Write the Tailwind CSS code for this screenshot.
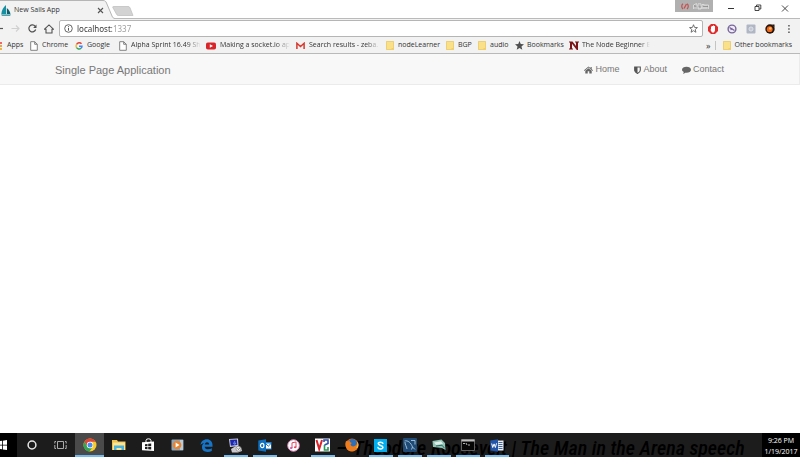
<!DOCTYPE html>
<html lang="en">
<head>
  <meta charset="UTF-8" />
  <meta name="viewport" content="width=device-width, initial-scale=1.0"/>
  <title>New Sails App</title>
  <script src="https://cdn.jsdelivr.net/npm/@tailwindcss/browser@4"></script>
</head>
<body class="flex h-screen flex-col overflow-hidden bg-white font-['Open_Sans','Noto_Sans',sans-serif] text-[7px] text-[#333]">

  <!-- Reusable shapes -->
  <svg class="hidden">
    <symbol id="doc" viewBox="0 0 8 10"><path d="M.7.7h4l2.6 2.6v6H.7zM4.7.7v2.6h2.6" fill="#fff" stroke="#777" stroke-width=".9"/></symbol>
    <symbol id="folder" viewBox="0 0 8 9"><path d="M.4.4h7.2v8.2H.4z" fill="#fbe08a" stroke="#e9c65c" stroke-width=".8"/><path d="M5.5 7h2v1.6h-2z" fill="#f3cf62"/></symbol>
  </svg>

  <!-- Tab strip -->
  <header class="relative flex h-[18px] shrink-0 items-stretch justify-between">
    <div class="flex">
      <div class="relative flex w-[112px] items-center pt-[2px]">
        <svg class="absolute inset-0 h-[19px] w-[120px]" viewBox="0 0 120 19"><path d="M0 .5h103c2 0 3 1 3.500 2.500L112 16c.6 1.500 1.500 2.500 3 2.500V19H0z" fill="#f2f2f2"/><path d="M0 .5h103c2 0 3 1 3.500 2.500L112 16c.6 1.500 1.500 2.500 3 2.500" fill="none" stroke="#b5b5b5"/></svg>
        <svg class="relative ml-px h-[11px] w-[10px]" viewBox="0 0 10 11"><path d="M5 0v9H.3C.6 5 2.500 2 5 0z" fill="#168fa0"/><path d="M5.800 3c2 1.600 3.300 3.600 3.600 6H5.800z" fill="#0b6070"/><path d="M0 9.500h10l-1 1.200H1z" fill="#1d8797"/></svg>
        <span class="relative ml-[3px] w-[83px]">New Sails App</span>
        <button class="relative" aria-label="Close tab"><svg class="size-[7px]" viewBox="0 0 7 7"><path d="M1 1l5 5M6 1L1 6" stroke="#555" stroke-width="1.100"/></svg></button>
      </div>
      <button class="relative mt-[5px] h-[11px]" aria-label="New tab"><svg class="h-[10px] w-[22px]" viewBox="0 0 22 10"><path d="M1.500.5h14.500c1 0 1.500.4 2 1.300L21 9.500H6.500c-1 0-1.600-.4-2-1.300L.8 1.500C.6.900.8.500 1.500.500z" fill="#d3d3d3" stroke="#bbb" stroke-width=".7"/></svg></button>
    </div>
    <div class="flex items-start">
      <div class="mr-[14px] flex h-[12px] w-[38px] items-center gap-[4px] bg-[#b0b0b0] pl-[6px]">
        <svg class="h-[7px] w-[8px]" viewBox="0 0 8 7"><path d="M2 .8C.3 2 .3 4.500 2 6M6 .8c1.700 1.200 1.700 3.700 0 5.200" fill="none" stroke="#c8504d" stroke-width="1.200"/><path d="M3 5.500L5.500 1" stroke="#c8504d" stroke-width="1.300"/></svg>
        <svg class="h-[7px] w-[16px]" viewBox="0 0 16 7"><path d="M.5 6V2l3-1.500L3 3h2V.8h3V6H5V3.500M1 5h3M9 6V1.500h2V6M11 2h2v4M13 2h2.500v4M5 5h10" fill="none" stroke="#e2e2e2" stroke-width=".8"/><path d="M1 3h2.500M6 4h2M10 3.500h5" stroke="#777" stroke-width=".6"/></svg>
      </div>
      <button class="h-[16px] w-[27px]" aria-label="Minimize"><svg class="h-[16px] w-[8px]" viewBox="0 0 8 16"><path d="M1 8.500h6" stroke="#333"/></svg></button>
      <button class="h-[16px] w-[27px]" aria-label="Restore"><svg class="h-[16px] w-[8px]" viewBox="0 0 8 16"><path d="M1 6.500h4v4H1zM2.500 6.500V5H6.800v4H5" fill="none" stroke="#333" stroke-width=".9"/></svg></button>
      <button class="h-[16px] w-[19px]" aria-label="Close"><svg class="h-[16px] w-[8px]" viewBox="0 0 8 16"><path d="M1 5.500l6 6M7 5.500l-6 6" stroke="#333" stroke-width=".9"/></svg></button>
    </div>
  </header>

  <!-- Toolbar -->
  <div class="flex h-[20px] shrink-0 items-center border-t border-[#bababa] bg-[#f2f2f2]">
    <button class="w-[11px]" aria-label="Back"><svg class="h-[9px] w-[4px]" viewBox="0 0 4 9"><path d="M0 4.500h3" stroke="#555" stroke-width="1.200"/></svg></button>
    <button class="w-[17px]" aria-label="Forward"><svg class="h-[9px] w-[9px]" viewBox="0 0 9 9"><path d="M.5 4.500h7.500M5 1.500l3 3-3 3" fill="none" stroke="#d0d0d0" stroke-width="1.100"/></svg></button>
    <button class="w-[16px]" aria-label="Reload"><svg class="size-[9px]" viewBox="0 0 9 9"><path d="M7.700 5.500A3.500 3.500 0 1 1 7.200 2.300" fill="none" stroke="#505050" stroke-width="1.200"/><path d="M8.500.5v3.400H5.100z" fill="#505050"/></svg></button>
    <button class="w-[15px]" aria-label="Home"><svg class="size-[10px]" viewBox="0 0 10 10"><path d="M.5 5.200L5 .9l4.500 4.300H8V9H2V5.200z" fill="none" stroke="#505050" stroke-width="1.100"/></svg></button>
    <div class="flex h-[17px] min-w-0 grow items-center rounded-[2px] border border-[#b5b5b5] bg-white px-[4px]">
      <svg class="size-[9px] shrink-0" viewBox="0 0 9 9"><circle cx="4.500" cy="4.500" r="3.800" fill="none" stroke="#555" stroke-width=".9"/><path d="M4.500 4v2.700M4.500 2.200v1" stroke="#555"/></svg>
      <div class="ml-[4px] grow font-['Noto_Sans','Open_Sans',sans-serif] text-[8px] leading-[12px]">
        <input aria-label="Address" value="localhost:1337" class="block w-full bg-linear-to-r from-[#333] from-[35px] to-[#999] to-[35px] bg-clip-text text-transparent outline-none"/>
      </div>
      <button aria-label="Bookmark this page"><svg class="size-[9px]" viewBox="0 0 10 10"><path d="M5 .8l1.200 3 3.200.2-2.500 2 .8 3.200L5 7.400 2.300 9.200l.8-3.200-2.500-2 3.200-.2z" fill="none" stroke="#555" stroke-width=".9"/></svg></button>
    </div>
    <div class="ml-[5px] flex w-[92px] shrink-0 items-center gap-[9px]">
      <svg class="size-[10px]" viewBox="0 0 10 10"><path d="M3 0h4l3 3v4l-3 3H3L0 7V3z" fill="#e02b2b"/><path d="M3 5V2.500h1V2h1v-.5h1V2h1v4.500L6 8.500H4L2.500 6z" fill="#fff"/></svg>
      <svg class="size-[10px]" viewBox="0 0 10 10"><circle cx="5" cy="5" r="3.900" fill="#f0ebf6" stroke="#76649a" stroke-width="1.400"/><path d="M2.500 3.500l5 3M3.500 5.500l2-1" stroke="#76649a" stroke-width="1.400"/></svg>
      <svg class="size-[10px]" viewBox="0 0 10 10"><rect x=".5" y=".5" width="9" height="9" rx="1" fill="#b1b6c4"/><circle cx="5" cy="5" r="2" fill="none" stroke="#e3e6ec"/><path d="M4.500 5h1" stroke="#fff"/></svg>
      <svg class="size-[10px]" viewBox="0 0 10 10"><circle cx="5" cy="5" r="4.700" fill="#251308"/><path d="M7 .5h2.500v3z" fill="#251308"/><circle cx="4.700" cy="5.200" r="2.900" fill="#f0691a"/><circle cx="5.300" cy="4.400" r="1.200" fill="#ffc46b"/></svg>
      <button aria-label="Menu"><svg class="h-[10px] w-[10px]" viewBox="0 0 10 10"><path d="M4.200 1h1.500v1.500H4.200zM4.200 4.300h1.500v1.500H4.200zM4.200 7.600h1.500v1.500H4.200z" fill="#555"/></svg></button>
    </div>
  </div>

  <!-- Bookmarks bar -->
  <nav class="flex h-[16px] shrink-0 items-center border-b border-[#b9b9b9] bg-[#f2f2f2] whitespace-nowrap" aria-label="Bookmarks">
    <a href="#" class="flex w-[30px] shrink-0 items-center gap-[4px]"><svg class="h-[9px] w-[3px]" viewBox="0 0 3 9"><path d="M0 1h2v2H0z" fill="#e66"/><path d="M0 4h2v2H0z" fill="#f5a33c"/><path d="M0 7h2v2H0z" fill="#e9b64a"/></svg>Apps</a>
    <a href="#" class="flex w-[45px] shrink-0 items-center gap-[4px]"><svg class="h-[10px] w-[8px]"><use href="#doc"/></svg>Chrome</a>
    <a href="#" class="flex w-[44px] shrink-0 items-center gap-[4px]"><svg class="size-[8px]" viewBox="0 0 8 8"><path d="M6.500 1.800A3 3 0 0 0 1.500 2.500" fill="none" stroke="#e34133" stroke-width="1.400"/><path d="M1.500 2.500a3 3 0 0 0 0 3" fill="none" stroke="#f5b912" stroke-width="1.400"/><path d="M1.500 5.500a3 3 0 0 0 4.500.8" fill="none" stroke="#35a353" stroke-width="1.400"/><path d="M6 6.300Q7 5.500 7 4.200H4" fill="none" stroke="#4285f4" stroke-width="1.400"/></svg>Google</a>
    <a href="#" class="flex w-[87px] shrink-0 items-center gap-[4px]"><svg class="h-[10px] w-[8px] shrink-0"><use href="#doc"/></svg><span class="w-[70px] overflow-hidden mask-r-from-80%">Alpha Sprint 16.49 Sh</span></a>
    <a href="#" class="flex w-[90px] shrink-0 items-center gap-[4px]"><svg class="h-[8px] w-[10px] shrink-0" viewBox="0 0 10 8"><rect y=".5" width="10" height="7" rx="1.800" fill="#d9252a"/><path d="M3.800 2.300L7 4 3.800 5.700z" fill="#fff"/></svg><span class="w-[70px] overflow-hidden mask-r-from-80%">Making a socket.io ap</span></a>
    <a href="#" class="flex w-[90px] shrink-0 items-center gap-[4px]"><svg class="h-[8px] w-[9px] shrink-0" viewBox="0 0 9 8"><path d="M1 1h7v6H1z" fill="#f5eeee"/><path d="M.9 7V1.300L4.500 4.500l3.600-3.200V7" fill="none" stroke="#d5392f" stroke-width="1.500"/></svg><span class="w-[71px] overflow-hidden mask-r-from-80%">Search results - zeba.</span></a>
    <a href="#" class="flex w-[60px] shrink-0 items-center gap-[4px]"><svg class="h-[9px] w-[8px]"><use href="#folder"/></svg>nodeLearner</a>
    <a href="#" class="flex w-[32px] shrink-0 items-center gap-[4px]"><svg class="h-[9px] w-[8px]"><use href="#folder"/></svg>BGP</a>
    <a href="#" class="flex w-[37px] shrink-0 items-center gap-[4px]"><svg class="h-[9px] w-[8px]"><use href="#folder"/></svg>audio</a>
    <a href="#" class="flex w-[54px] shrink-0 items-center gap-[3px]"><svg class="size-[9px]" viewBox="0 0 10 10"><path d="M5 0l1.400 3.400 3.600.3-2.800 2.300.9 3.700L5 7.700 1.900 9.700 2.800 6 0 3.700l3.600-.3z" fill="#505050"/></svg>Bookmarks</a>
    <a href="#" class="flex w-[81px] shrink-0 items-center gap-[3px]"><svg class="h-[9px] w-[10px] shrink-0" viewBox="0 0 10 9"><path d="M0 .5h3.500L7 5V1.500H6v-1h4v1H9V9H7.800L3 2.800v4.700h1v1H0v-1h1v-6H0z" fill="#7d1418"/></svg><span class="w-[70px] overflow-hidden mask-r-from-85%">The Node Beginner B</span></a>
    <div class="ml-auto flex shrink-0 items-center pr-[8px]">
      <button class="mr-[4px] text-[9px] leading-[9px]" aria-label="More bookmarks">»</button>
      <span class="mr-[7px] h-[9px] w-px bg-[#c4c4c4]"></span>
      <a href="#" class="flex items-center gap-[4px]"><svg class="h-[9px] w-[8px]"><use href="#folder"/></svg>Other bookmarks</a>
    </div>
  </nav>

  <!-- Page -->
  <main class="grow font-['Liberation_Sans',Arial,sans-serif]">
    <nav class="flex h-[31px] items-center justify-between border-r border-b border-[#ebebeb] bg-[#f8f8f8] pt-[2px] pr-[75px] pl-[55px] text-[#777]">
      <a href="#" class="text-[11px]">Single Page Application</a>
      <ul class="flex gap-[15px] text-[9px]">
        <li><a href="#" class="flex items-center gap-[2px]"><svg class="h-[8px] w-[9px]" viewBox="0 0 9 8"><path d="M4.500.5L9 4.300l-.5.600-4-3.300-4 3.300L0 4.300z" fill="#666"/><path d="M1.300 4.800l3.200-2.600 3.200 2.600v2.700H5.300V5.300H3.700v2.200H1.300zM6.500.9h1.200v2.300L6.500 2.200z" fill="#666"/></svg>Home</a></li>
        <li><a href="#" class="flex items-center gap-[2px]"><svg class="h-[8px] w-[7px]" viewBox="0 0 7 8"><path d="M.7 1h5.600v3.200c0 1.500-1.300 2.500-2.800 3.300C2 6.700.7 5.700.7 4.200z" fill="none" stroke="#555" stroke-width="1.100"/><path d="M.7 1h2.800v6.500C2 6.700.7 5.700.7 4.200z" fill="#555"/></svg>About</a></li>
        <li><a href="#" class="flex items-center gap-[2px]"><svg class="h-[8px] w-[9px]" viewBox="0 0 9 8"><path d="M4.500.8C7 .8 9 2.100 9 3.800S7 6.800 4.500 6.800c-.4 0-.8 0-1.200-.1-.7.600-1.500.9-2.300 1 .4-.5.700-1 .8-1.600C.7 5.500 0 4.700 0 3.800 0 2.100 2 .8 4.500.8z" fill="#666"/></svg>Contact</a></li>
      </ul>
    </nav>
  </main>

  <!-- Taskbar -->
  <footer class="relative flex h-[24px] shrink-0 items-stretch overflow-hidden bg-[#1c1c1c]">
    <!-- Wallpaper caption seen through the bar -->
    <p class="absolute top-[4px] left-[336px] font-['Roboto_Condensed','Open_Sans_Condensed',Lato,sans-serif] text-[20px] leading-[22px] font-medium whitespace-nowrap text-black italic">— Theodore Roosevelt | The Man in the Arena speech</p>
    <button class="relative flex w-[17px] items-center bg-black" aria-label="Start"><svg class="h-[10px] w-[8px]" viewBox="0 0 8 10"><path d="M0 1l2-.2v3.900H0zM2.800.7L7 .1v4.600H2.800zM0 5.400h2v3.900L0 9.100zM2.800 5.400H7v4.500l-4.200-.5z" fill="#fff"/></svg></button>
    <button class="relative flex w-[29px] items-center justify-center" aria-label="Cortana"><svg class="size-[10px]" viewBox="0 0 10 10"><circle cx="5" cy="5" r="3.900" fill="none" stroke="#e6e6e6" stroke-width="1.500"/></svg></button>
    <button class="relative flex w-[29px] items-center justify-center" aria-label="Task view"><svg class="h-[10px] w-[13px]" viewBox="0 0 13 10"><path d="M3.500 1.500h6v7h-6zM2 1.500H.8v2M.8 5v3.500H2M11 1.500h1.200v2M12.200 5v3.500H11" fill="none" stroke="#bbb" stroke-width=".9"/></svg></button>
    <button class="relative flex w-[29px] items-center justify-center bg-[#4a4a4a]" aria-label="Chrome"><svg class="size-[14px]" viewBox="0 0 14 14"><circle cx="7" cy="7" r="6.500" fill="#f9cb28"/><path d="M7 .5A6.500 6.500 0 0 1 12.600 3.800H7L4.200 8.600 1.400 3.700A6.500 6.500 0 0 1 7 .5z" fill="#e0473a"/><path d="M1.400 3.700L4.200 8.600 7 10.200h2L6.300 13.500A6.500 6.500 0 0 1 1.400 3.700z" fill="#35a455"/><circle cx="7" cy="7" r="3.200" fill="#fff"/><circle cx="7" cy="7" r="2.500" fill="#4a8af4"/></svg><span class="absolute bottom-0 h-[2px] w-full bg-[#76b9ed]"></span></button>
    <button class="relative flex w-[29px] items-center justify-center" aria-label="File Explorer"><svg class="h-[12px] w-[14px]" viewBox="0 0 14 12"><path d="M0 1h5l1 1.500h7.500V11H0z" fill="#eec14e"/><path d="M1 3.500h12V11H1z" fill="#fbe391"/><path d="M2 6.500h10V11H9.500V9h-5v2H2z" fill="#4bb1dd"/></svg></button>
    <button class="relative flex w-[29px] items-center justify-center" aria-label="Store"><svg class="size-[14px]" viewBox="0 0 14 14"><path d="M5 4V2.500Q5 .8 7.500.8T10 2.500V4" fill="none" stroke="#fff"/><path d="M1 4.200L13 3.500V13L1 12.300z" fill="#fff"/><path d="M4 6.200l2.500-.3v2.300H4zM7.200 5.800l3-.3v2.700h-3zM4 8.900h2.500v2.300L4 11zM7.200 8.900h3v2.700l-3-.3z" fill="#1c1c1c"/></svg></button>
    <button class="relative flex w-[30px] items-center justify-center" aria-label="Media Player"><svg class="h-[12px] w-[13px]" viewBox="0 0 13 12"><rect x=".5" y=".5" width="12" height="11" rx="1" fill="#8ba6b8"/><path d="M9 1h3v10H9z" fill="#b9cbd5"/><circle cx="6" cy="6" r="4.300" fill="#e98330"/><path d="M4.600 3.600L8.500 6 4.600 8.400z" fill="#fff"/></svg></button>
    <button class="relative flex w-[29px] items-center justify-center" aria-label="Edge"><svg class="size-[13px]" viewBox="0 0 13 13"><path d="M.5 6C1 2.500 3.500.3 6.800.3c3.500 0 5.700 2.600 5.700 5.700v1.700H4.600c.2 1.700 1.700 2.600 3.500 2.600 1.400 0 2.600-.4 3.700-1v2.600c-1.300.7-2.700 1-4.300 1C4.200 12.900 2 11 2 8.200c0-1.700.8-3.200 2.200-4.100C2.500 4.300 1.300 5 .5 6zm4.300-.5h4.400C9.200 4 8.400 3.200 7 3.200S4.900 4.200 4.800 5.500z" fill="#1675c8"/></svg></button>
    <button class="relative flex w-[29px] items-center justify-center" aria-label="PuTTY"><svg class="size-[15px]" viewBox="0 0 15 15"><path d="M1 1l9-.5.5 7.500L2 9z" fill="#d2d2dc"/><path d="M2 1.800l7-.3.4 5.500-6.600.8z" fill="#1d27ae"/><path d="M7 3L5.500 5.500 8 5 6 7.500" fill="none" stroke="#7e9df5" stroke-width=".8"/><path d="M3 11l5-3 5 1 1 4-4 1.500H4z" fill="#c9c9cf"/><circle cx="10.500" cy="10.800" r="2.500" fill="#eee" stroke="#777" stroke-width=".6"/><path d="M9.500 10.500l1 1 1.500-2" fill="none" stroke="#444" stroke-width=".7"/></svg><span class="absolute bottom-0 h-[2px] w-[24px] bg-[#76b9ed]"></span></button>
    <button class="relative flex w-[29px] items-center justify-center" aria-label="Outlook"><svg class="h-[13px] w-[14px]" viewBox="0 0 14 13"><path d="M7 3h6.500v7.500H7z" fill="#1c80d1"/><path d="M7.500 4.500h5.500v5H7.500z" fill="#fff"/><path d="M7.500 4.500l2.800 2.700L13 4.500" fill="none" stroke="#1272c2"/><path d="M.3 1.500L8 .2v12.600L.3 11.500z" fill="#0f70bf"/><ellipse cx="4.200" cy="6.500" rx="1.700" ry="2.100" fill="none" stroke="#fff" stroke-width="1.200"/></svg><span class="absolute bottom-0 h-[2px] w-[24px] bg-[#76b9ed]"></span></button>
    <button class="relative flex w-[29px] items-center justify-center" aria-label="iTunes"><svg class="size-[13px]" viewBox="0 0 13 13"><circle cx="6.500" cy="6.500" r="5.800" fill="#fff" stroke="#dd87b4"/><path d="M5 9V3.800l4-.8v5" fill="none" stroke="#e6455f"/><ellipse cx="4.200" cy="9" rx="1.300" ry="1" fill="#d64db2"/><ellipse cx="8.200" cy="8.200" rx="1.300" ry="1" fill="#e6455f"/></svg></button>
    <button class="relative flex w-[29px] items-center justify-center" aria-label="VNC Viewer"><svg class="h-[14px] w-[15px]" viewBox="0 0 15 14"><path d="M0 .5h15v13H0z" fill="#fff"/><path d="M1.500 2l2.700 9L7 2" fill="none" stroke="#d9242b" stroke-width="2"/><path d="M9 4V2h4v3.500L9.500 7" fill="none" stroke="#2d4fb3" stroke-width="1.600"/><path d="M9.500 7v5H13V9" fill="none" stroke="#2a9b55" stroke-width="1.600"/></svg><span class="absolute bottom-0 h-[2px] w-[24px] bg-[#76b9ed]"></span></button>
    <button class="relative flex w-[29px] items-center justify-center" aria-label="Firefox"><svg class="size-[14px]" viewBox="0 0 14 14"><circle cx="7" cy="7" r="6.500" fill="#e3691c"/><circle cx="7.500" cy="5.500" r="4.500" fill="#2e6fb8"/><path d="M1 3l2 .5L5 2.500 4.800 4l2 1L5.500 6.500C6 8.500 8.500 9 10 7.800 12 7 12.500 5 12 3c1.500 2 2 5 .3 7.500C10 14 4 14.500 1.500 10.500.3 8 .2 5 1 3z" fill="#ee7d20"/><path d="M11.500 3c1.500 2.500 1.200 5-.5 6.500l1.500.5c1.500-2.500 1-5-1-7z" fill="#fbbd36"/></svg></button>
    <button class="relative flex w-[29px] items-center justify-center" aria-label="Skype"><svg class="size-[13px]" viewBox="0 0 13 13"><path d="M0 0h13v13H0z" fill="#00aff0"/><path d="M8.900 4.200C8.500 3 4.300 2.500 4.200 4.600c0 2.400 4.800 1.200 4.700 3.700C8.800 10.600 4.200 10.200 4 8.600" fill="none" stroke="#fff" stroke-width="1.500" stroke-linecap="round"/></svg><span class="absolute bottom-0 h-[2px] w-[24px] bg-[#76b9ed]"></span></button>
    <button class="relative flex w-[29px] items-center justify-center" aria-label="MySQL Workbench"><svg class="size-[14px]" viewBox="0 0 14 14"><rect width="14" height="14" rx="1" fill="#1f4b76"/><path d="M1.500 3C5 2 8 5 9.500 9l2.500 2.500M2 4c0 3 1.500 4 2 7M9.500 9l-1 2.500M8 2.500h4v4" fill="none" stroke="#a9c8de" stroke-width=".9"/></svg><span class="absolute bottom-0 h-[2px] w-[24px] bg-[#76b9ed]"></span></button>
    <button class="relative flex w-[29px] items-center justify-center" aria-label="Notes"><svg class="h-[12px] w-[14px]" viewBox="0 0 14 12"><path d="M.5 2l9-1.500L13 4l.5 7-3.500-2-9-1z" fill="#8fc3b3"/><path d="M2 3.500l7-1.200L11 5 4 6z" fill="#e0efe9"/><path d="M4 7l6-.8 2.500 3" fill="none" stroke="#2f6b65"/></svg><span class="absolute bottom-0 h-[2px] w-[24px] bg-[#76b9ed]"></span></button>
    <button class="relative flex w-[29px] items-center justify-center" aria-label="Command Prompt"><svg class="h-[12px] w-[14px]" viewBox="0 0 14 12"><path d="M.5.500h13v11H.5z" fill="#050505" stroke="#777" stroke-width=".8"/><path d="M.5.500h13v2H.5z" fill="#bcbcbc"/><path d="M2 4.500h2M5 4l1 2M7 6h2" stroke="#ddd" stroke-width=".8"/></svg><span class="absolute bottom-0 h-[2px] w-[24px] bg-[#76b9ed]"></span></button>
    <button class="relative flex w-[29px] items-center justify-center" aria-label="Word"><svg class="h-[13px] w-[14px]" viewBox="0 0 14 13"><path d="M7 1.500h6.500v10H7z" fill="#e9eef7"/><path d="M8.500 3.500h4M8.500 5.500h4M8.500 7.500h4M8.500 9.500h4" stroke="#2b579a" stroke-width=".9"/><path d="M.3 1.500L8 .2v12.600L.3 11.500z" fill="#2356a8"/><path d="M1.700 4.500l1 4 1.400-3.600 1.300 3.600 1.100-4.200" fill="none" stroke="#fff" stroke-width="1"/></svg><span class="absolute bottom-0 h-[2px] w-[24px] bg-[#76b9ed]"></span></button>
    <div class="relative ml-auto flex w-[38px] flex-col items-center justify-center bg-black pt-px text-[7px] leading-[11px] whitespace-nowrap text-white">
      <time>9:26 PM</time>
      <time>1/19/2017</time>
    </div>
  </footer>
</body>
</html>
